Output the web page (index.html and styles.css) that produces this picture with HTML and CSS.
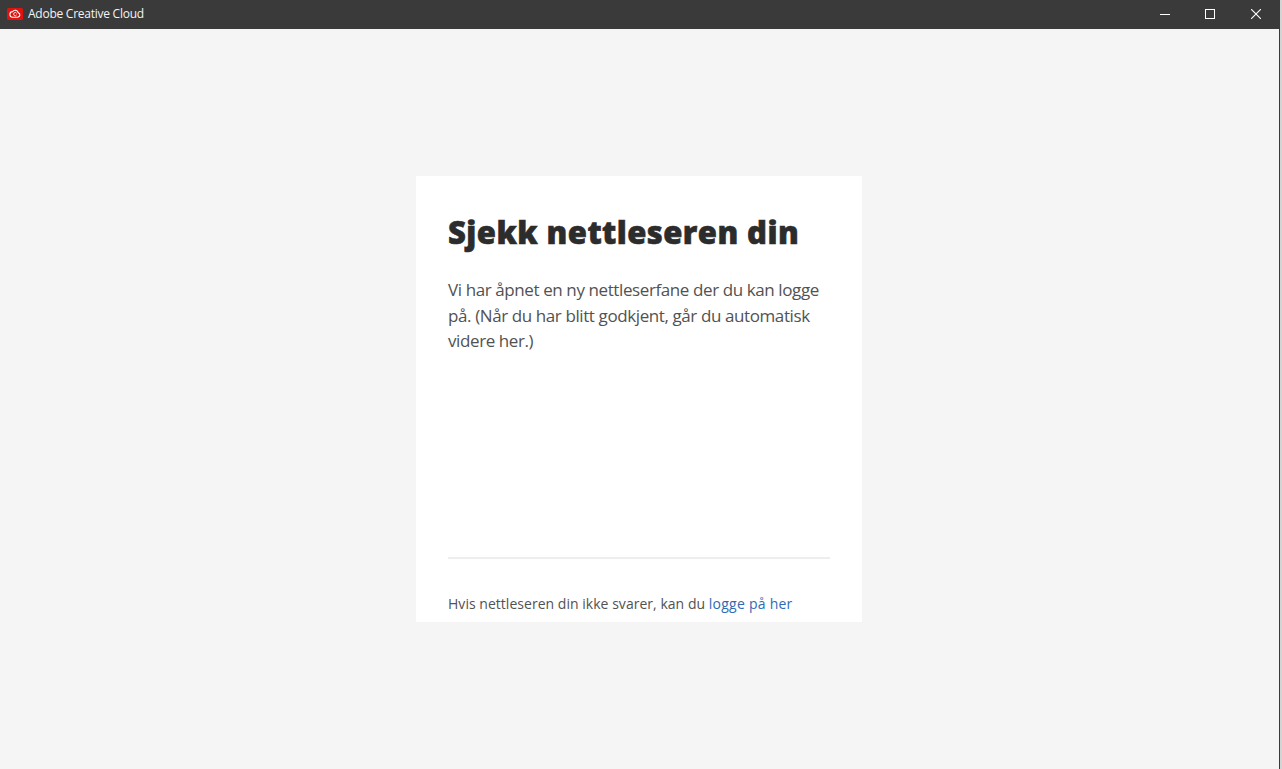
FILE: index.html
```html
<!DOCTYPE html>
<html lang="no">
<head>
<meta charset="utf-8">
<title>Adobe Creative Cloud</title>
<link rel="stylesheet" href="styles.css">
</head>
<body>
<div class="window">
  <header class="titlebar">
    <div class="app">
      <svg class="logo" width="16" height="12" viewBox="0 0 16 12"><rect width="16" height="12" rx="1.5" fill="#e0120f"/><path d="M5.8 9.2h4.9a2.3 2.3 0 0 0 .5-4.5A3.1 3.1 0 0 0 5.6 3.6a2.8 2.8 0 0 0 .2 5.6Z" fill="none" stroke="#fff" stroke-width="1.1"/><path d="M9.6 6.9a1.6 1.6 0 1 1 0-1.6" fill="none" stroke="#fff" stroke-width=".9"/></svg>
      <span class="app-name">Adobe Creative Cloud</span>
    </div>
    <div class="controls">
      <button class="ctl ctl-min"><svg width="10" height="10" viewBox="0 0 10 10"><path d="M0 5.5h10" stroke="#fff"/></svg></button>
      <button class="ctl"><svg width="10" height="10" viewBox="0 0 10 10"><rect x=".5" y=".5" width="9" height="9" fill="none" stroke="#fff"/></svg></button>
      <button class="ctl"><svg width="10" height="10" viewBox="0 0 10 10"><path d="M0 0l10 10M10 0L0 10" stroke="#fff" stroke-width="1.1"/></svg></button>
    </div>
  </header>
  <main class="stage">
    <section class="card">
      <div class="card-top">
        <h1 class="title">Sjekk nettleseren din</h1>
        <p class="lead">Vi har åpnet en ny nettleserfane der du kan logge på. (Når du har blitt godkjent, går du automatisk videre her.)</p>
      </div>
      <div class="card-foot">
        <p class="foot-text">Hvis nettleseren din ikke svarer, kan du <a class="link" href="#">logge på her</a></p>
      </div>
    </section>
  </main>
</div>
</body>
</html>
```
FILE: styles.css
```css
* { box-sizing: border-box; }
html, body { margin: 0; height: 100%; }
body { font-family: "Open Sans", "Noto Sans", sans-serif; background: #d4d4d4; overflow: hidden; }
.window { width: 1280px; height: 769px; display: flex; flex-direction: column; background: #f5f5f5; border-right: 1px solid #3a3a3a; }
.titlebar { height: 29px; flex: none; background: #3a3a3a; display: flex; justify-content: space-between; align-items: center; padding: 0 0 1px 7px; }
.app { display: flex; align-items: center; gap: 5px; }
.logo { display: block; }
.app-name { color: #f4f4f4; font-size: 12px; line-height: 16px; padding-bottom: 1px; letter-spacing: -.25px; }
.controls { display: flex; }
.ctl { width: 46px; height: 28px; padding: 0; border: 0; background: none; display: flex; align-items: center; justify-content: center; }
.ctl-min { padding-left: 2px; }
.stage { flex: 1; display: flex; padding: 147px 0 0 416px; }
.card { width: 446px; height: 446px; background: #fff; padding: 32px 32px 0; display: flex; flex-direction: column; }
.card-top { height: 351px; border-bottom: 2px solid #eeeeee; width: 382px; flex: none; }
.title { margin: 0; font-size: 31px; line-height: 48px; font-weight: 800; letter-spacing: .43px; -webkit-text-stroke: .6px #2c2c2c; color: #2c2c2c; white-space: nowrap; }
.lead { margin: 21px 0 0; font-size: 17px; line-height: 25.5px; letter-spacing: -.4px; color: #525252; }
.card-foot { padding-top: 34px; }
.foot-text { margin: 0; font-size: 14px; line-height: 21px; letter-spacing: .03px; color: #525252; white-space: nowrap; }
.link { color: #2d6bb5; text-decoration: none; letter-spacing: .25px; }
```
